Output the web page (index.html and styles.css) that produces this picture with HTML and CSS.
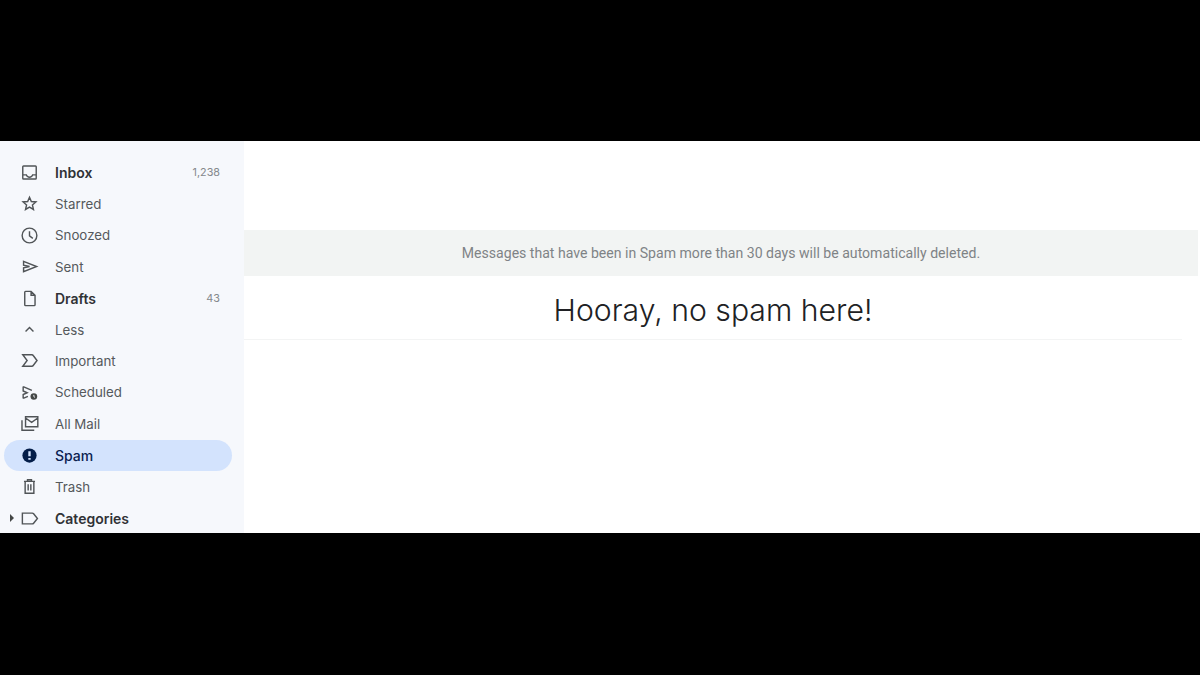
FILE: index.html
```html
<!DOCTYPE html>
<html lang="en">
<head>
    <meta charset="UTF-8">
    <meta name="viewport" content="width=device-width, initial-scale=1.0">
    <title>Spam</title>
    <link rel="stylesheet" href="styles.css">
</head>
<body>
    <div class="screen">
        <nav class="sidebar">
            <a class="item bold">
                <svg viewBox="0 0 24 24"><path d="M4.500 3.800h15a1 1 0 0 1 1 1v14.400a1 1 0 0 1-1 1h-15a1 1 0 0 1-1-1V4.800a1 1 0 0 1 1-1zM3.500 15h4.500a4.200 4.200 0 0 0 8 0h4.500"/></svg>
                <span class="label">Inbox</span>
                <span class="count">1,238</span>
            </a>
            <a class="item">
                <svg viewBox="0 0 24 24"><path d="M12 4.200l2.300 5.300 5.800.5-4.400 3.800 1.300 5.700-5-3-5 3 1.300-5.700L3.900 10l5.800-.5z"/></svg>
                <span class="label">Starred</span>
            </a>
            <a class="item">
                <svg viewBox="0 0 24 24"><circle cx="12" cy="12" r="9.300"/><path d="M12 6.500v5.900l4.200 3.200"/></svg>
                <span class="label">Snoozed</span>
            </a>
            <a class="item">
                <svg viewBox="0 0 24 24"><path d="M4.500 5.500L21 12 4.500 18.500v-4.700l7.500-1.800-7.500-1.800z"/></svg>
                <span class="label">Sent</span>
            </a>
            <a class="item bold">
                <svg viewBox="0 0 24 24"><path d="M7 3h7l5 5v12a1 1 0 0 1-1 1H7a1 1 0 0 1-1-1V4a1 1 0 0 1 1-1zM14 3v5h5"/></svg>
                <span class="label">Drafts</span>
                <span class="count">43</span>
            </a>
            <a class="item">
                <svg viewBox="0 0 24 24"><path d="M7 14.500l5-5 5 5"/></svg>
                <span class="label">Less</span>
            </a>
            <a class="item">
                <svg viewBox="0 0 24 24"><path d="M3.500 4.800H15c.7 0 1.300.3 1.700.9l4.800 6.300-4.800 6.300c-.4.600-1 .9-1.700.9H3.500L9 12z"/></svg>
                <span class="label">Important</span>
            </a>
            <a class="item">
                <svg viewBox="0 0 24 24"><path d="M4 4.500l11 4.700M4 19.500v-5l5-2.200-5-2.200V4.500M4 19.500l6-2.500"/><circle class="fill" cx="17.500" cy="17" r="4.200"/><path class="tick" d="M17.500 15v2.200l1.500 1"/></svg>
                <span class="label">Scheduled</span>
            </a>
            <a class="item">
                <svg viewBox="0 0 24 24"><path d="M7 3.500h15.500v12.500H7zM7 5l7.700 5.500L22.500 5M2.500 8v12.500h15.500"/></svg>
                <span class="label">All Mail</span>
            </a>
            <a class="item active">
                <svg viewBox="0 0 24 24"><circle class="fill" cx="12" cy="12" r="9"/><path class="mark" d="M12 6.500v6.500M12 15v2.500"/></svg>
                <span class="label">Spam</span>
            </a>
            <a class="item">
                <svg viewBox="0 0 24 24"><path d="M5 5.500h14M9.500 5.500V3.500h5v2M6.500 5.500V20.500h11V5.500M10.300 9v8M13.700 9v8"/></svg>
                <span class="label">Trash</span>
            </a>
            <a class="item bold">
                <span class="caret"></span>
                <svg viewBox="0 0 24 24"><path d="M3 5.200h12.500c.7 0 1.300.3 1.700.8l4.800 6-4.800 6c-.4.500-1 .8-1.700.8H3z"/></svg>
                <span class="label">Categories</span>
            </a>
        </nav>
        <main class="content">
            <div class="notice">Messages that have been in Spam more than 30 days will be automatically deleted.</div>
            <h1 class="empty">Hooray, no spam here!</h1>
        </main>
    </div>
</body>
</html>
```

FILE: styles.css
```css
body {
    margin: 0;
    background-color: #000;
    font-family: Inter, Roboto, "Liberation Sans", sans-serif;
}
.screen {
    display: flex;
    width: 1200px;
    height: 392px;
    margin-top: 141px;
    margin-bottom: 142px;
    background-color: #fff;
    overflow: hidden;
}
.sidebar {
    width: 244px;
    flex-shrink: 0;
    box-sizing: border-box;
    padding: 15.600px 12px 0 4px;
    background-color: #f6f8fc;
}
.item {
    position: relative;
    display: flex;
    align-items: center;
    height: 31.450px;
    padding: 0 12px 0 16px;
    border-radius: 16px;
    font-size: 13.300px;
    color: #55595c;
}
.item svg {
    width: 19px;
    height: 19px;
    flex-shrink: 0;
    margin-right: 16px;
    fill: none;
    stroke: #505457;
    stroke-width: 1.800;
}
.item .fill {
    fill: #444746;
    stroke: none;
}
.item .tick {
    stroke: #f6f8fc;
    stroke-width: 1.200;
}
.label {
    flex: 1;
}
.count {
    font-size: 10.800px;
    font-weight: 400;
    color: #85888c;
}
.bold {
    font-size: 14px;
    font-weight: 600;
    color: #303236;
}
.active {
    background-color: #d3e3fd;
    font-size: 14px;
    font-weight: 500;
    color: #0b2150;
}
.active svg .fill {
    fill: #041e49;
}
.active svg .mark {
    stroke: #d3e3fd;
    stroke-width: 3;
}
.caret {
    position: absolute;
    left: 6px;
    top: 12px;
    border-left: 4px solid #444746;
    border-top: 4px solid transparent;
    border-bottom: 4px solid transparent;
}
.content {
    flex: 1;
    padding-top: 89px;
}
.notice {
    height: 46px;
    line-height: 46px;
    margin-right: 2px;
    background-color: #f2f4f3;
    text-align: center;
    font-family: Roboto, sans-serif;
    font-size: 14.080px;
    color: #7f8386;
}
.empty {
    height: 63px;
    line-height: 69px;
    margin: 0 18px 0 0;
    border-bottom: 1px solid #f3f4f4;
    text-align: center;
    font-size: 30.200px;
    font-weight: 300;
    color: #202124;
}
```
